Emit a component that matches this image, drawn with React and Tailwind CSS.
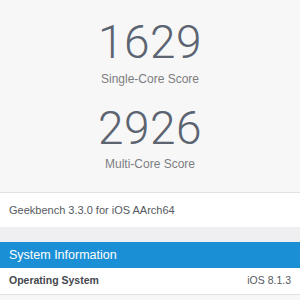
export default function App() {
  return (
    <div className="w-[300px] h-[300px] overflow-hidden bg-[#f7f7f8] font-['Liberation_Sans',Arial,sans-serif]">
      <div className="flex flex-col items-center pt-[19px]">
        <div className="font-['Roboto',sans-serif] font-light text-[46px] leading-[46px] text-[#5b6470] tracking-[0.5px]">
          1629
        </div>
        <div className="mt-[7px] text-[12px] leading-[14px] text-[#7d7d80]">
          Single-Core Score
        </div>
        <div className="mt-[19px] font-['Roboto',sans-serif] font-light text-[46px] leading-[46px] text-[#5b6470] tracking-[0.5px]">
          2926
        </div>
        <div className="mt-[6px] text-[12px] leading-[14px] text-[#7d7d80]">
          Multi-Core Score
        </div>
      </div>
      <div className="mt-[21px] border-t border-[#e2e2e4] bg-white h-[35px] flex items-center px-[9px] text-[11px] text-[#555a60]">
        Geekbench 3.3.0 for iOS AArch64
      </div>
      <div className="h-[15px] bg-[#efeff2]" />
      <div className="h-[26px] bg-[#1b8fd5] flex items-center px-[9px] text-[12.5px] text-white">
        System Information
      </div>
      <div className="h-[27px] bg-white border-b border-[#e2e2e4] flex items-center justify-between px-[9px] text-[10.5px]">
        <span className="font-bold text-[#44484d]">Operating System</span>
        <span className="text-[#555a60]">iOS 8.1.3</span>
      </div>
    </div>
  );
}
